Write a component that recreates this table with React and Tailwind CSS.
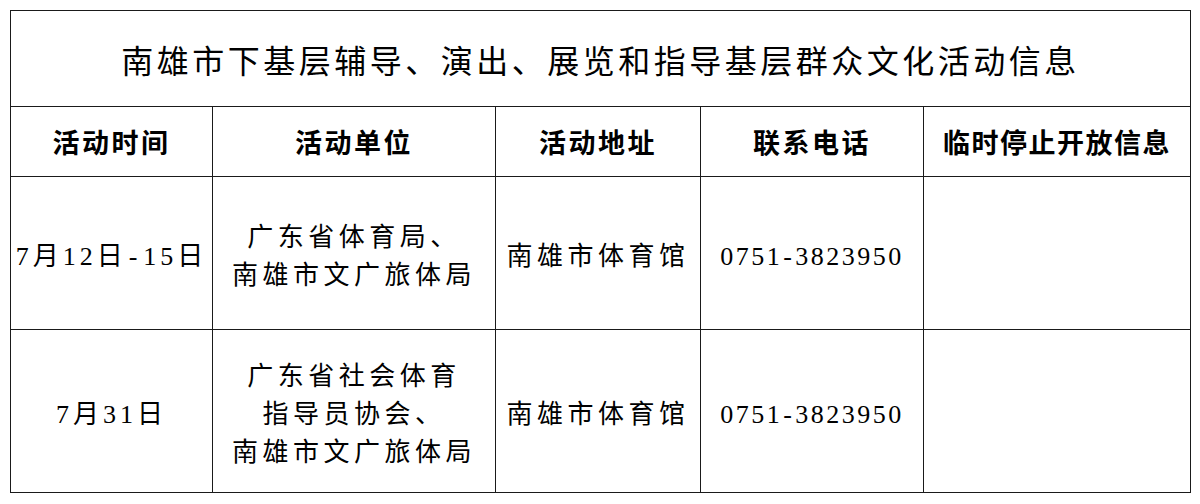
export default function App() {
  const font = { fontFamily: '"Liberation Serif", "Noto Sans CJK SC", serif' };
  const cell = "border border-[#1a1a1a] text-center align-middle p-0 text-black";
  return (
    <div className="w-[1200px] h-[504px] bg-white pt-[10px] pl-[10px]" style={font}>
      <table className="table-fixed border-collapse w-[1180px]">
        <colgroup>
          <col className="w-[202px]" />
          <col className="w-[283px]" />
          <col className="w-[205px]" />
          <col className="w-[223px]" />
          <col className="w-[267px]" />
        </colgroup>
        <tbody>
          <tr className="h-[96px]">
            <td colSpan={5} className={`${cell} pt-[6px] text-[32px] leading-none tracking-[3.5px]`}>
              南雄市下基层辅导、演出、展览和指导基层群众文化活动信息
            </td>
          </tr>
          <tr className="h-[70px] text-[27px] font-semibold leading-none tracking-[2.5px]">
            <td className={`${cell} pt-[6px]`}>活动时间</td>
            <td className={`${cell} pt-[6px]`}>活动单位</td>
            <td className={`${cell} pt-[6px]`}>活动地址</td>
            <td className={`${cell} pt-[6px]`}>联系电话</td>
            <td className={`${cell} pt-[6px] tracking-[1.5px]`}>临时停止开放信息</td>
          </tr>
          <tr className="h-[153px] text-[26px] leading-[38px]">
            <td className={`${cell} pt-[8px] whitespace-nowrap tracking-[4px]`}>
              7月12日<span className="mx-[2px]">-</span>15日
            </td>
            <td className={`${cell} pt-[8px] tracking-[4.5px]`}>
              <div>广东省体育局、</div>
              <div>南雄市文广旅体局</div>
            </td>
            <td className={`${cell} pt-[8px] tracking-[4.5px]`}>南雄市体育馆</td>
            <td className={`${cell} pt-[8px] tracking-[2.5px]`}>
              0751<span className="mx-[1px]">-</span>3823950
            </td>
            <td className={cell}></td>
          </tr>
          <tr className="h-[163px] text-[26px] leading-[38px]">
            <td className={`${cell} pt-[8px] whitespace-nowrap tracking-[4px]`}>7月31日</td>
            <td className={`${cell} pt-[8px] tracking-[4.5px]`}>
              <div>广东省社会体育</div>
              <div>指导员协会、</div>
              <div>南雄市文广旅体局</div>
            </td>
            <td className={`${cell} pt-[8px] tracking-[4.5px]`}>南雄市体育馆</td>
            <td className={`${cell} pt-[8px] tracking-[2.5px]`}>
              0751<span className="mx-[1px]">-</span>3823950
            </td>
            <td className={cell}></td>
          </tr>
        </tbody>
      </table>
    </div>
  );
}
